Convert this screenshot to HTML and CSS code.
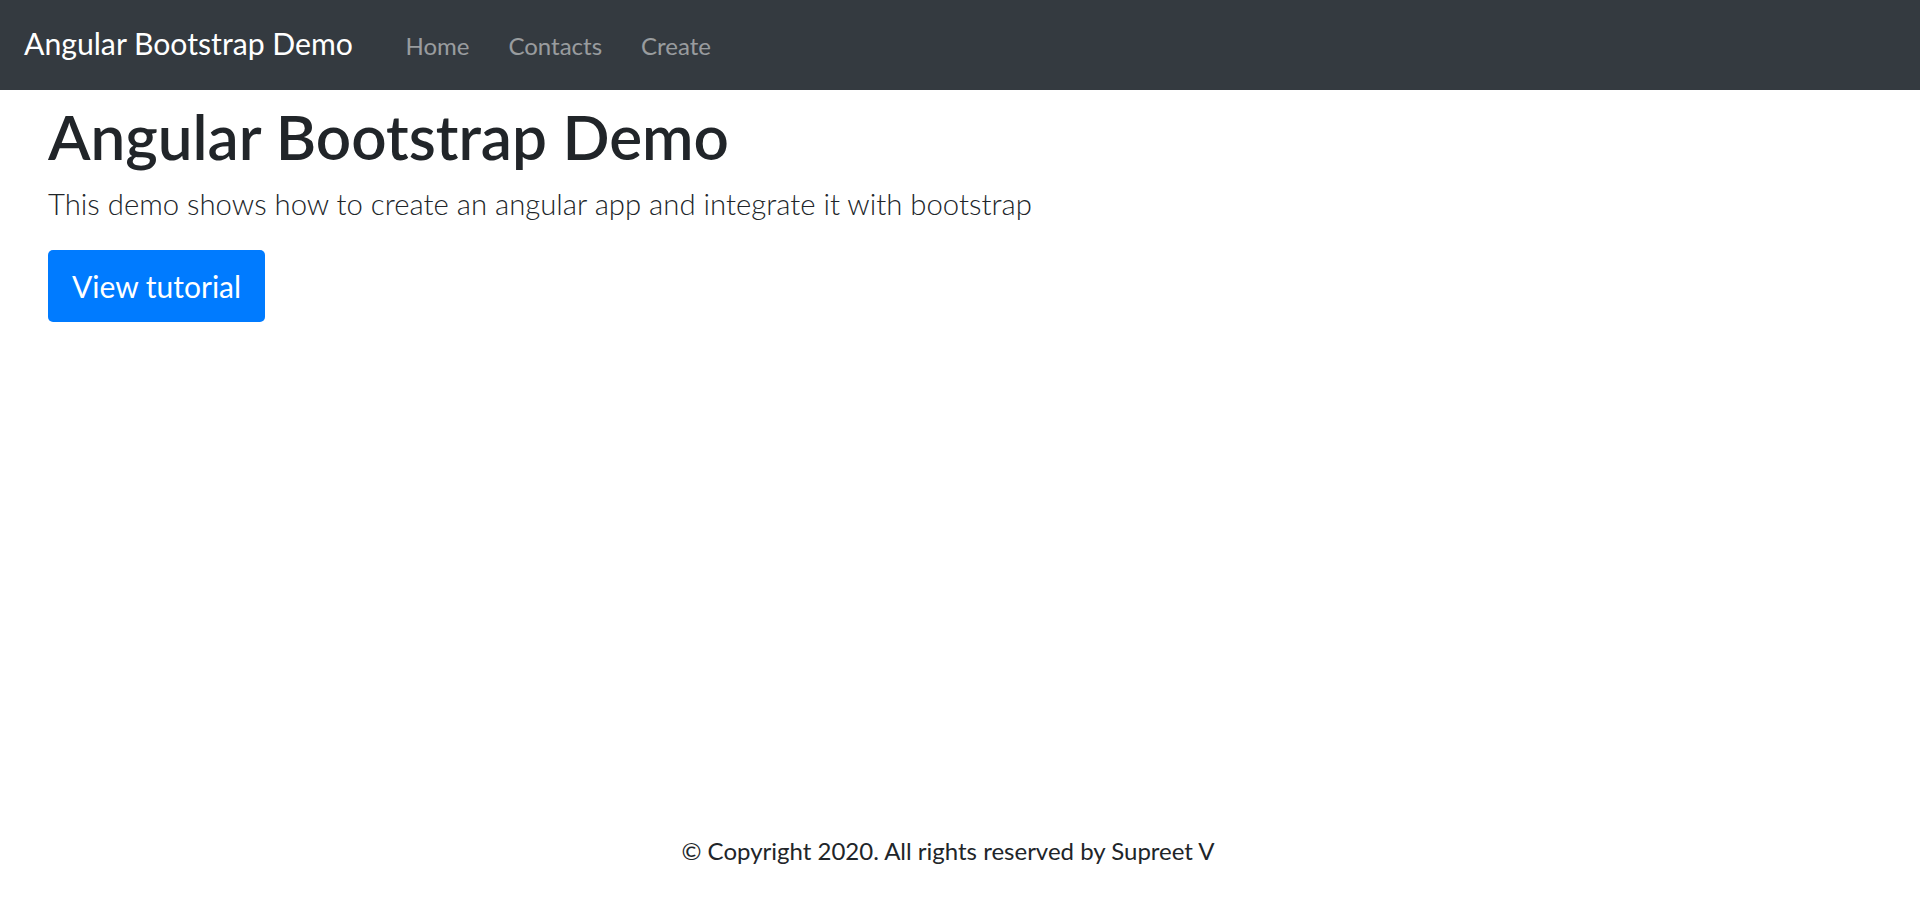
FILE: index.html
```html
<!DOCTYPE html>
<html lang="en">
<head>
<meta charset="utf-8">
<title>Angular Bootstrap Demo</title>
<link rel="stylesheet" href="styles.css">
</head>
<body>
<nav class="navbar">
  <a class="brand" href="#">Angular Bootstrap Demo</a>
  <ul class="nav">
    <li><a class="nav-link" href="#">Home</a></li>
    <li><a class="nav-link" href="#">Contacts</a></li>
    <li><a class="nav-link" href="#">Create</a></li>
  </ul>
</nav>
<main class="content">
  <h1 class="title">Angular Bootstrap Demo</h1>
  <p class="lead">This demo shows how to create an angular app and integrate it with bootstrap</p>
  <a class="btn" href="#">View tutorial</a>
</main>
<footer class="footer">© Copyright 2020. All rights reserved by Supreet V</footer>
</body>
</html>
```
FILE: styles.css
```css
* { box-sizing: border-box; }
html, body { height: 100%; }
body {
  margin: 0;
  font-family: Lato, "Open Sans", sans-serif;
  color: #212529;
  background: #fff;
  display: flex;
  flex-direction: column;
  min-height: 100vh;
}
a { text-decoration: none; }

.navbar {
  height: 90px;
  background: #343a40;
  display: flex;
  align-items: baseline;
  padding: 21px 24px 0;
}
.brand {
  color: #fff;
  font-size: 30.2px;
  line-height: 45px;
  margin-right: 33px;
  white-space: nowrap;
}
.nav {
  list-style: none;
  margin: 0;
  padding: 0;
  display: flex;
  align-items: baseline;
}
.nav-link {
  display: block;
  color: rgba(255, 255, 255, 0.5);
  font-size: 24px;
  line-height: 36px;
  padding: 0 19.5px;
}

.content {
  padding: 10px 48px 0;
  display: flex;
  flex-direction: column;
  align-items: flex-start;
}
.title {
  font-size: 62px;
  font-weight: 600;
  line-height: 72px;
  margin: 0 0 9px;
}
.lead {
  font-size: 29.3px;
  font-weight: 300;
  line-height: 45px;
  margin: 0 0 24px;
}
.btn {
  display: inline-block;
  background: #007bff;
  color: #fff;
  font-size: 30px;
  line-height: 46px;
  padding: 13px 24px;
  border-radius: 5px;
}

.footer {
  margin-top: auto;
  text-align: center;
  font-size: 24px;
  line-height: 36px;
  padding: 0 24px 47px 0;
}
```
